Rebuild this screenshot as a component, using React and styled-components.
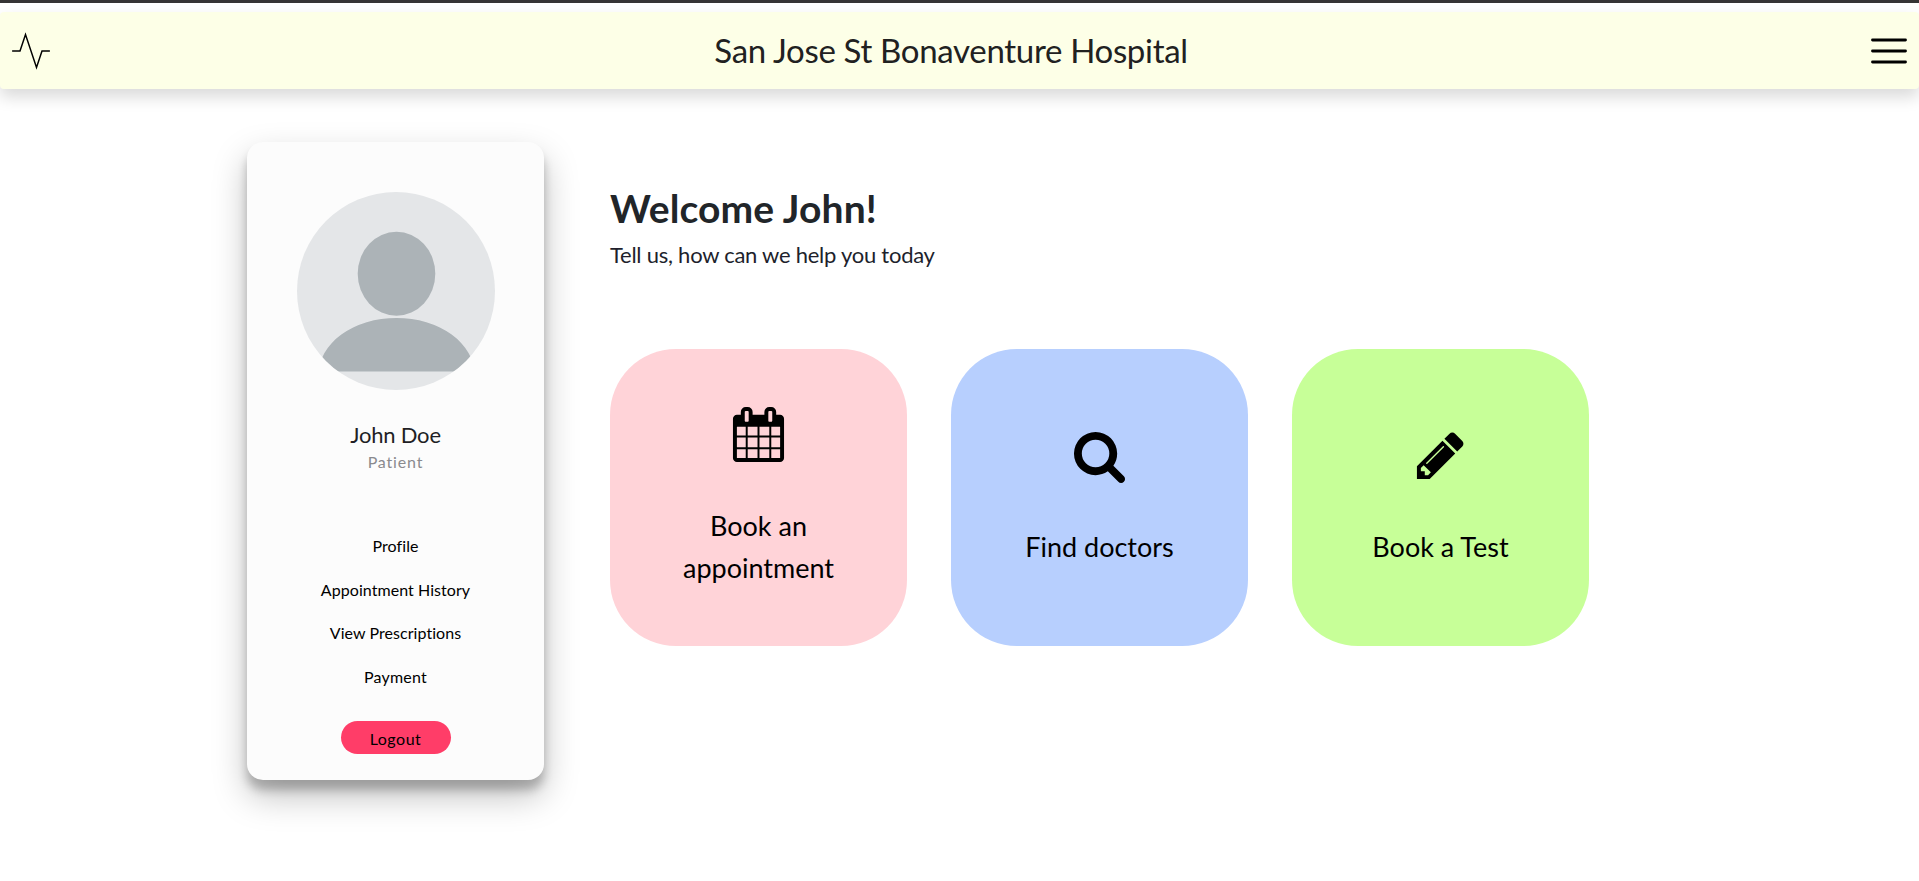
import React from "react";
import styled, { createGlobalStyle } from "styled-components";

const GlobalStyle = createGlobalStyle`
  *, *::before, *::after { box-sizing: border-box; }
  body {
    margin: 0;
    background: #fff;
    color: #212529;
    font-family: Lato, "Open Sans", sans-serif;
    font-variant-ligatures: none;
  }
`;

const Page = styled.div`
  min-height: 881px;
  border-top: 3px solid #363435;
  padding-top: 9px;
`;

const Header = styled.header`
  display: flex;
  align-items: center;
  justify-content: space-between;
  height: 77px;
  padding: 0 8px 0 9px;
  border-radius: 4px;
  background: #fdffe7;
  box-shadow: 0 8px 16px rgba(0, 0, 0, 0.15);
`;

const HeaderIcon = styled.svg`
  width: 44px;
  height: 44px;
  fill: none;
  stroke: #000;
`;

const HospitalName = styled.h1`
  margin: 0;
  padding: 0 18px 2px 0;
  font-size: 33px;
  font-weight: 400;
  line-height: 40px;
  letter-spacing: -0.32px;
  color: #212121;
`;

const Content = styled.div`
  display: flex;
  align-items: flex-start;
  gap: 66px;
  padding: 53px 0 0 247px;
`;

const ProfileCard = styled.aside`
  display: flex;
  flex-direction: column;
  align-items: center;
  width: 297px;
  height: 638px;
  padding-top: 50px;
  border-radius: 16px;
  background: #fcfcfc;
  box-shadow: 0 16px 34px rgba(0, 0, 0, 0.25), 0 10px 10px rgba(0, 0, 0, 0.22);
`;

const AvatarImage = styled.svg`
  display: block;
  width: 198px;
  height: 198px;
  border-radius: 50%;
`;

const PersonName = styled.div`
  margin-top: 31px;
  font-size: 22px;
  line-height: 28px;
  letter-spacing: -0.2px;
  color: #1f1f25;
`;

const Role = styled.div`
  margin-top: 1px;
  font-size: 16px;
  line-height: 24px;
  letter-spacing: 0.85px;
  color: #8a8a8e;
`;

const Menu = styled.nav`
  display: flex;
  flex-direction: column;
  align-items: center;
  gap: 19.67px;
  margin-top: 60px;
`;

const MenuLink = styled.a`
  font-size: 16px;
  line-height: 24px;
  letter-spacing: ${(p) => p.$tracking}px;
  color: #000;
  text-decoration: none;
`;

const LogoutButton = styled.button`
  width: 110px;
  height: 33px;
  margin-top: 32px;
  padding: 3px 0 0;
  border: 0;
  border-radius: 17px;
  background: #ff3d68;
  color: #000;
  font: 400 16px/24px Lato, sans-serif;
  letter-spacing: 0.5px;
`;

const Main = styled.main`
  padding-top: 43px;
`;

const Welcome = styled.h2`
  margin: 0;
  font-size: 39px;
  font-weight: 700;
  line-height: 46px;
  letter-spacing: 0.12px;
`;

const Prompt = styled.p`
  margin: 7px 0 78px;
  font-size: 22px;
  line-height: 33px;
  letter-spacing: -0.25px;
  color: #211f2c;
`;

const Tiles = styled.div`
  display: flex;
  gap: 44px;
`;

const Tile = styled.a`
  display: flex;
  flex-direction: column;
  align-items: center;
  justify-content: center;
  gap: 43px;
  width: 297px;
  height: 297px;
  padding: 0 60px;
  border-radius: 66px;
  background: ${(p) => p.$color};
  color: #000;
  font-size: 27px;
  line-height: 41.500px;
  text-align: center;
`;

const TileIcon = styled.svg`
  display: block;
  flex: none;
  width: 55px;
  height: 55px;
  fill: #000;
`;

const links = [
  { label: "Profile", tracking: 0.1 },
  { label: "Appointment History", tracking: 0.06 },
  { label: "View Prescriptions", tracking: 0.06 },
  { label: "Payment", tracking: 0.2 },
];

const tiles = [
  {
    label: "Book an appointment",
    color: "#ffd3d8",
    path: "M192 1664h288v-288h-288v288zm352 0h320v-288h-320v288zm-352-352h288v-320h-288v320zm352 0h320v-320h-320v320zm-352-384h288v-288h-288v288zm736 736h320v-288h-320v288zm-384-736h320v-288h-320v288zm768 736h288v-288h-288v288zm-384-352h320v-320h-320v320zm-352-864v-288q0-13-9.500-22.500t-22.500-9.500h-64q-13 0-22.500 9.500t-9.500 22.500v288q0 13 9.500 22.500t22.500 9.500h64q13 0 22.500-9.500t9.500-22.500zm736 864h288v-320h-288v320zm-384-384h320v-288h-320v288zm384 0h288v-288h-288v288zm32-480v-288q0-13-9.500-22.500t-22.500-9.500h-64q-13 0-22.500 9.500t-9.500 22.500v288q0 13 9.500 22.500t22.500 9.500h64q13 0 22.500-9.500t9.500-22.500zm384-64v1280q0 52-38 90t-90 38h-1408q-52 0-90-38t-38-90v-1280q0-52 38-90t90-38h128v-96q0-66 47-113t113-47h64q66 0 113 47t47 113v96h384v-96q0-66 47-113t113-47h64q66 0 113 47t47 113v96h128q52 0 90 38t38 90z",
  },
  {
    label: "Find doctors",
    color: "#b7cffe",
    path: "M1216 832q0-185-131.500-316.500t-316.500-131.500-316.500 131.500-131.500 316.500 131.500 316.500 316.500 131.500 316.500-131.500 131.500-316.500zm512 832q0 52-38 90t-90 38q-54 0-90-38l-343-342q-179 124-399 124-143 0-273.500-55.500t-225-150-150-225-55.500-273.500 55.500-273.500 150-225 225-150 273.500-55.500 273.500 55.500 225 150 150 225 55.500 273.500q0 220-124 399l343 343q37 37 37 90z",
  },
  {
    label: "Book a Test",
    color: "#c7ff98",
    path: "M491 1536l91-91-235-235-91 91v107h128v128h107zm523-928q0-22-22-22-10 0-17 7l-542 542q-7 7-7 17 0 22 22 22 10 0 17-7l542-542q7-7 7-17zm-54-192l416 416-832 832h-416v-416zm683 96q0 53-37 90l-166 166-416-416 166-165q36-38 90-38 53 0 91 38l235 234q37 39 37 91z",
  },
];

function Avatar() {
  return (
    <AvatarImage viewBox="0 0 198 198">
      <rect width="198" height="198" fill="#e4e6e8" />
      <ellipse cx="99.500" cy="81.800" rx="38.800" ry="42" fill="#acb3b7" />
      <path d="M21.500 182.700A78 56.700 0 0 1 177.500 182.700V179.500H21.500z" fill="#acb3b7" />
    </AvatarImage>
  );
}

export default function App() {
  return (
    <>
      <GlobalStyle />
      <Page>
        <Header>
          <HeaderIcon viewBox="0 0 24 24" strokeWidth="0.8">
            <path d="M1.700 12H6L9 3l6 18 3-9h4.300" />
          </HeaderIcon>
          <HospitalName>San Jose St Bonaventure Hospital</HospitalName>
          <HeaderIcon viewBox="0 0 24 24" strokeWidth="1.550" strokeLinecap="round">
            <path d="M3 6h18M3 12h18M3 18h18" />
          </HeaderIcon>
        </Header>
        <Content>
          <ProfileCard>
            <Avatar />
            <PersonName>John Doe</PersonName>
            <Role>Patient</Role>
            <Menu>
              {links.map((link) => (
                <MenuLink key={link.label} $tracking={link.tracking}>
                  {link.label}
                </MenuLink>
              ))}
            </Menu>
            <LogoutButton>Logout</LogoutButton>
          </ProfileCard>
          <Main>
            <Welcome>Welcome John!</Welcome>
            <Prompt>Tell us, how can we help you today</Prompt>
            <Tiles>
              {tiles.map((tile) => (
                <Tile key={tile.label} $color={tile.color}>
                  <TileIcon viewBox="0 0 1792 1792">
                    <path d={tile.path} />
                  </TileIcon>
                  {tile.label}
                </Tile>
              ))}
            </Tiles>
          </Main>
        </Content>
      </Page>
    </>
  );
}
